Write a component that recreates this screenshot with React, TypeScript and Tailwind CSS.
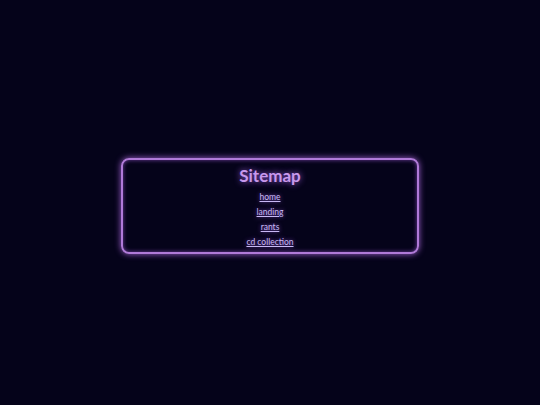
import React from 'react';

const links = ['home', 'landing', 'rants', 'cd collection'];

export default function App() {
  return (
    <div className="min-h-screen w-full bg-[#05031a] flex items-center justify-center" style={{ fontFamily: 'Lato, "Open Sans", sans-serif' }}>
      <div className="w-[298px] h-[96px] mt-[6px] rounded-[8px] border-2 border-[#b07ad8] shadow-[0_0_6px_#a060d0,inset_0_0_4px_#7040a0] flex flex-col items-center pt-[5px]">
        <h1 className="text-[17px] leading-[22px] font-bold text-[#c898ec] [text-shadow:0_0_6px_#a060e0]">Sitemap</h1>
        <ul className="flex flex-col items-center mt-[3px]">
          {links.map((l) => (
            <li key={l} className="h-[15px] flex items-center">
              <a href="#" className="text-[8.5px] leading-[15px] text-[#c8b8f4] underline [text-shadow:0_0_4px_#8050c0]">{l}</a>
            </li>
          ))}
        </ul>
      </div>
    </div>
  );
}
